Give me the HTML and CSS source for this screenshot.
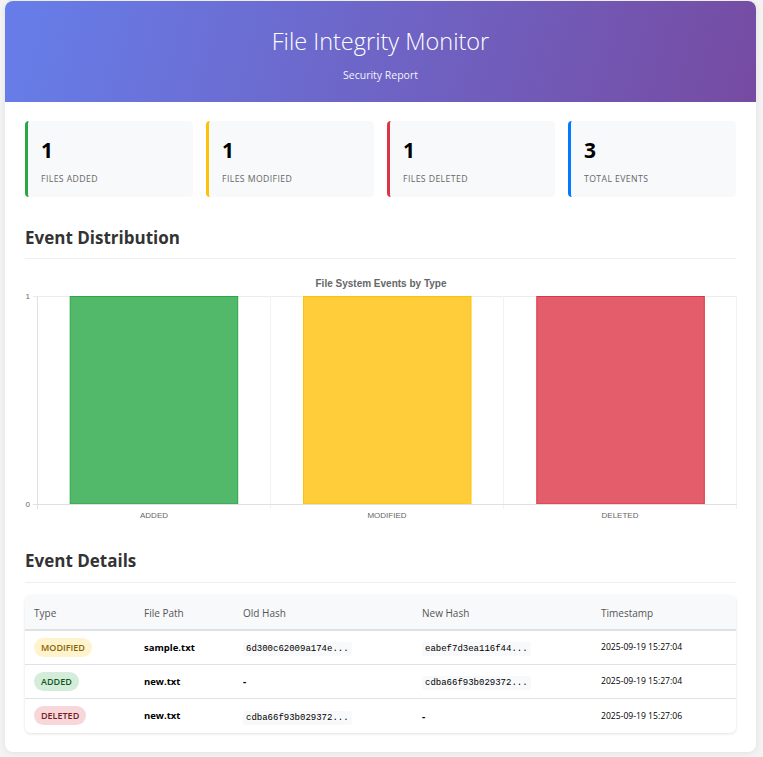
FILE: index.html
```html
<!DOCTYPE html>
<html lang="en">
<head>
<meta charset="utf-8">
<title>File Integrity Monitor</title>
<link rel="stylesheet" href="styles.css">
</head>
<body>
<div class="container">
  <header class="header">
    <h1 class="title">File Integrity Monitor</h1>
    <p class="subtitle">Security Report</p>
  </header>
  <main class="content">
    <section class="stats">
      <div class="stat stat-added"><div class="stat-num">1</div><div class="stat-label">Files Added</div></div>
      <div class="stat stat-modified"><div class="stat-num">1</div><div class="stat-label">Files Modified</div></div>
      <div class="stat stat-deleted"><div class="stat-num">1</div><div class="stat-label">Files Deleted</div></div>
      <div class="stat stat-total"><div class="stat-num">3</div><div class="stat-label">Total Events</div></div>
    </section>

    <h2 class="section-title">Event Distribution</h2>
    <div class="chart">
      <svg class="chart-svg" width="712" height="266" viewBox="0 0 712 266">
        <text x="356" y="27.5" text-anchor="middle" class="chart-title">File System Events by Type</text>
        <line x1="12" y1="37.5" x2="712" y2="37.5" stroke="#ececec"/>
        <line x1="8" y1="37.5" x2="12" y2="37.5" stroke="#ececec"/>
        <line x1="245.5" y1="37" x2="245.5" y2="250" stroke="#f2f2f2"/>
        <line x1="478.5" y1="37" x2="478.5" y2="250" stroke="#f2f2f2"/>
        <line x1="711.5" y1="37" x2="711.5" y2="250" stroke="#f2f2f2"/>
        <rect x="45.2" y="37.5" width="167.5" height="207.5" fill="rgba(40,167,69,0.8)" stroke="#28a745" stroke-width="1"/>
        <rect x="278.5" y="37.5" width="167.5" height="207.5" fill="rgba(255,193,7,0.8)" stroke="#ffc107" stroke-width="1"/>
        <rect x="511.8" y="37.5" width="167.5" height="207.5" fill="rgba(220,53,69,0.8)" stroke="#dc3545" stroke-width="1"/>
        <line x1="12.5" y1="37" x2="12.5" y2="250" stroke="#e0e0e0"/>
        <line x1="8" y1="245.5" x2="712" y2="245.5" stroke="#e0e0e0"/>
        <text x="5" y="40" text-anchor="end" class="tick">1</text>
        <text x="5" y="248" text-anchor="end" class="tick">0</text>
        <text x="129" y="259" text-anchor="middle" class="tick">ADDED</text>
        <text x="362" y="259" text-anchor="middle" class="tick">MODIFIED</text>
        <text x="595" y="259" text-anchor="middle" class="tick">DELETED</text>
      </svg>
    </div>

    <h2 class="section-title section-title-2">Event Details</h2>
    <div class="table-wrap">
      <table class="events">
        <thead>
          <tr>
            <th class="c-type">Type</th>
            <th class="c-path">File Path</th>
            <th class="c-old">Old Hash</th>
            <th class="c-new">New Hash</th>
            <th class="c-time">Timestamp</th>
          </tr>
        </thead>
        <tbody>
          <tr>
            <td><span class="badge badge-modified">MODIFIED</span></td>
            <td class="path">sample.txt</td>
            <td><code class="hash">6d300c62009a174e...</code></td>
            <td><code class="hash">eabef7d3ea116f44...</code></td>
            <td class="time">2025-09-19 15:27:04</td>
          </tr>
          <tr>
            <td><span class="badge badge-added">ADDED</span></td>
            <td class="path">new.txt</td>
            <td class="dash">-</td>
            <td><code class="hash">cdba66f93b029372...</code></td>
            <td class="time">2025-09-19 15:27:04</td>
          </tr>
          <tr>
            <td><span class="badge badge-deleted">DELETED</span></td>
            <td class="path">new.txt</td>
            <td><code class="hash">cdba66f93b029372...</code></td>
            <td class="dash">-</td>
            <td class="time">2025-09-19 15:27:06</td>
          </tr>
        </tbody>
      </table>
    </div>
  </main>
</div>
</body>
</html>
```

FILE: styles.css
```css
* { box-sizing: border-box; }

html, body {
  margin: 0;
  padding: 0;
}

body {
  background: #f3f3f3;
  font-family: "Open Sans", "Noto Sans", sans-serif;
  color: #333;
  padding: 1px 0 4px 5px;
}

.container {
  width: 751px;
  background: #fff;
  border-radius: 8px;
  box-shadow: 0 1px 6px rgba(0, 0, 0, 0.08);
  overflow: hidden;
}

.header {
  background: linear-gradient(105deg, #667eea 0%, #764ba2 100%);
  color: #fff;
  text-align: center;
  padding: 24px 20px 20px;
  height: 101px;
}

.title {
  margin: 0;
  font-size: 23.5px;
  font-weight: 300;
  line-height: 32px;
}

.subtitle {
  margin: 11px 0 0;
  font-size: 10.5px;
  line-height: 14px;
  opacity: 0.92;
}

.content {
  padding: 19px 20px 19px 20px;
}

.stats {
  display: grid;
  grid-template-columns: repeat(4, 1fr);
  gap: 13px;
}

.stat {
  background: #f8f9fa;
  border-radius: 4px;
  border-left: 3px solid #ccc;
  height: 76px;
  padding: 16px 12px 0 13px;
}

.stat-added { border-left-color: #28a745; }
.stat-modified { border-left-color: #ffc107; }
.stat-deleted { border-left-color: #dc3545; }
.stat-total { border-left-color: #007bff; }

.stat-num {
  font-size: 21px;
  font-weight: 700;
  line-height: 26px;
  color: #000;
}

.stat-label {
  margin-top: 10px;
  font-size: 8.7px;
  line-height: 12px;
  text-transform: uppercase;
  letter-spacing: 0.4px;
  color: #666;
}

.section-title {
  margin: 29px 0 0;
  font-size: 17px;
  font-weight: 700;
  line-height: 24px;
  padding-bottom: 8px;
  border-bottom: 1px solid #eee;
  color: #333;
}

.section-title-2 {
  margin-top: 24px;
  padding-bottom: 9px;
}

.chart {
  height: 266px;
}

.chart-svg {
  display: block;
  font-family: "Liberation Sans", Arial, sans-serif;
}

.chart-title {
  font-size: 10px;
  font-weight: 700;
  fill: #666;
}

.tick {
  font-size: 8px;
  fill: #666;
}

.table-wrap {
  margin-top: 12px;
  border-radius: 6px;
  box-shadow: 0 1px 3px rgba(0, 0, 0, 0.12);
  overflow: hidden;
}

.events {
  width: 100%;
  border-collapse: collapse;
  table-layout: fixed;
  font-size: 10px;
}

.events th {
  background: #f8f9fa;
  color: #555;
  font-weight: 500;
  text-align: left;
  height: 35px;
  padding: 2px 9px 0;
  border-bottom: 2px solid #dee2e6;
}

.events td {
  height: 34px;
  padding: 0 9px;
  border-bottom: 1px solid #dee2e6;
  color: #000;
}

.events tbody tr:last-child td { border-bottom: none; height: 35px; }

.c-type { width: 110px; }
.c-path { width: 99px; }
.c-old { width: 179px; }
.c-new { width: 179px; }

.badge {
  display: inline-block;
  padding: 3px 7px;
  border-radius: 10px;
  font-size: 9px;
  line-height: 13px;
  font-weight: 600;
}

.badge-modified { background: #fff3cd; color: #856404; }
.badge-added { background: #d4edda; color: #155724; }
.badge-deleted { background: #f8d7da; color: #721c24; }

.path {
  font-weight: 700;
  font-size: 9.5px;
}

.hash {
  font-family: "Liberation Mono", "Courier New", monospace;
  font-size: 9px;
  background: #f8f9fa;
  padding: 2px 3px;
  border-radius: 3px;
}

.dash { font-weight: 700; }

.time {
  color: #777;
  font-size: 8.6px;
}
```
